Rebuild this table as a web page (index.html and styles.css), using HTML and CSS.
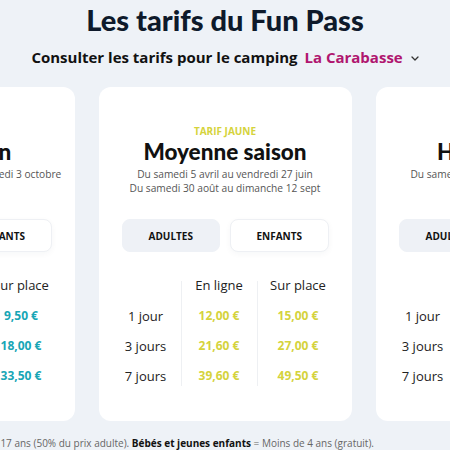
FILE: index.html
```html
<!DOCTYPE html>
<html lang="fr">
<head>
  <meta charset="UTF-8">
  <meta name="viewport" content="width=device-width, initial-scale=1.0">
  <title>Les tarifs du Fun Pass</title>
  <link rel="stylesheet" href="styles.css">
</head>
<body>

<header class="intro">
  <h1 class="title">Les tarifs du Fun Pass</h1>
  <p class="subtitle">
    Consulter les tarifs pour le camping
    <span class="camp">La Carabasse
      <svg class="chevron" width="8" height="5" viewBox="0 0 8 5"><path d="M1 1l3 3 3-3" fill="none" stroke="#333" stroke-width="1.3" stroke-linecap="round" stroke-linejoin="round"/></svg>
    </span>
  </p>
</header>

<div class="cards">
  <!-- Basse saison -->
  <article class="card blue">
    <div class="tag">Tarif bleu</div>
    <h2 class="season">Basse saison</h2>
    <div class="dates">Du samedi 13 septembre au vendredi 3 octobre</div>
    <div class="tabs">
      <button class="tab active">Adultes</button>
      <button class="tab">Enfants</button>
    </div>
    <div class="prices">
      <div class="col labels">
        <span class="head"></span>
        <span>1 jour</span><span>3 jours</span><span>7 jours</span>
      </div>
      <div class="col">
        <span class="head">En ligne</span>
        <b>7,60 €</b><b>14,40 €</b><b>26,80 €</b>
      </div>
      <div class="col">
        <span class="head">Sur place</span>
        <b>9,50 €</b><b>18,00 €</b><b>33,50 €</b>
      </div>
    </div>
  </article>

  <!-- Moyenne saison -->
  <article class="card yellow">
    <div class="tag">Tarif jaune</div>
    <h2 class="season">Moyenne saison</h2>
    <div class="dates">Du samedi 5 avril au vendredi 27 juin<br>Du samedi 30 août au dimanche 12 sept</div>
    <div class="tabs">
      <button class="tab active">Adultes</button>
      <button class="tab">Enfants</button>
    </div>
    <div class="prices">
      <div class="col labels">
        <span class="head"></span>
        <span>1 jour</span><span>3 jours</span><span>7 jours</span>
      </div>
      <div class="col">
        <span class="head">En ligne</span>
        <b>12,00 €</b><b>21,60 €</b><b>39,60 €</b>
      </div>
      <div class="col">
        <span class="head">Sur place</span>
        <b>15,00 €</b><b>27,00 €</b><b>49,50 €</b>
      </div>
    </div>
  </article>

  <!-- Haute saison -->
  <article class="card red">
    <div class="tag">Tarif rouge</div>
    <h2 class="season">Haute saison</h2>
    <div class="dates">Du samedi 28 juin au vendredi 29 août</div>
    <div class="tabs">
      <button class="tab active">Adultes</button>
      <button class="tab">Enfants</button>
    </div>
    <div class="prices">
      <div class="col labels">
        <span class="head"></span>
        <span>1 jour</span><span>3 jours</span><span>7 jours</span>
      </div>
      <div class="col">
        <span class="head">En ligne</span>
        <b>15,20 €</b><b>27,40 €</b><b>50,00 €</b>
      </div>
      <div class="col">
        <span class="head">Sur place</span>
        <b>19,00 €</b><b>34,20 €</b><b>62,50 €</b>
      </div>
    </div>
  </article>
</div>

<div class="note">
  <p><b>Adultes</b> = 18 ans et plus. <b>Enfants</b> = De 4 à 17 ans (50% du prix adulte). <b>Bébés et jeunes enfants</b> = Moins de 4 ans (gratuit).</p>
</div>

</body>
</html>
```

FILE: styles.css
```css
* {
  margin: 0;
  padding: 0;
  box-sizing: border-box;
}
body {
  width: 450px;
  height: 450px;
  overflow: hidden;
  font-family: 'Open Sans', sans-serif;
  background: #eef2f7;
  color: #1a1a1a;
}
.intro {
  text-align: center;
  padding-top: 2px;
}
.title {
  font-family: Lato, sans-serif;
  font-weight: 900;
  font-size: 29px;
  line-height: 36px;
  color: #0e1a2b;
}
.subtitle {
  margin-top: 9px;
  font-size: 15px;
  font-weight: 700;
  line-height: 20px;
  color: #111;
}
.camp {
  color: #b0166f;
  margin-left: 3px;
}
.chevron {
  margin-left: 4px;
  vertical-align: middle;
}
.cards {
  display: flex;
  justify-content: center;
  gap: 24px;
  margin-top: 20px;
}
.card {
  flex: 0 0 253px;
  width: 253px;
  min-width: 0;
  background: #fff;
  border-radius: 12px;
  padding: 38px 23px 35px;
  text-align: center;
}
.tag {
  font-size: 10px;
  font-weight: 700;
  text-transform: uppercase;
  line-height: 12px;
}
.season {
  margin-top: 1px;
  font-family: Lato, sans-serif;
  font-weight: 900;
  font-size: 22.5px;
  line-height: 27px;
  color: #111;
}
.dates {
  margin: 2px -20px 0;
  min-height: 28px;
  font-size: 10.2px;
  line-height: 14px;
  color: #555;
  white-space: nowrap;
}
.tabs {
  display: flex;
  gap: 10px;
  margin-top: 24px;
}
.tab {
  flex: 1;
  height: 33px;
  font-family: 'Open Sans', sans-serif;
  font-size: 10px;
  font-weight: 700;
  text-transform: uppercase;
  color: #111;
  background: #fff;
  border: 1px solid #eef0f4;
  border-radius: 8px;
  box-shadow: 0 2px 6px rgba(30, 40, 80, 0.04);
}
.tab.active {
  background: #eef1f6;
  border-color: #eef1f6;
  box-shadow: none;
}
.prices {
  display: flex;
  margin: 29px 0 0 -11px;
}
.col {
  flex-shrink: 0;
  display: flex;
  flex-direction: column;
  gap: 10px;
  width: 76px;
  border-left: 1px solid #eef0f3;
  font-size: 13px;
  line-height: 20px;
}
.col.labels {
  width: 70px;
  border-left: none;
  color: #222;
}
.col:last-child {
  width: 82px;
}
.col .head {
  height: 20px;
  color: #222;
  margin-top: -6px;
  margin-bottom: 1px;
}
.col b {
  font-size: 12px;
}
.blue .tag, .blue b { color: #18a6b6; }
.yellow .tag, .yellow b { color: #d5d33c; }
.red .tag, .red b { color: #e0463d; }
.note {
  display: flex;
  justify-content: flex-end;
  padding-right: 76px;
  margin-top: 15px;
}
.note p {
  flex-shrink: 0;
  white-space: nowrap;
  font-size: 10px;
  color: #666;
}
.note b {
  color: #111;
}
```
